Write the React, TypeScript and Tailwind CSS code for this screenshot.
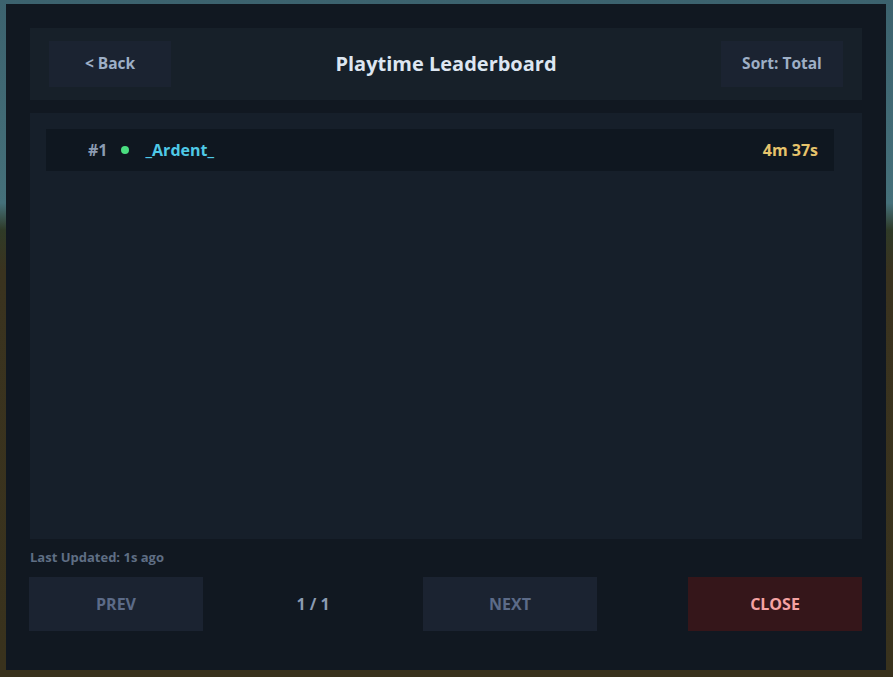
import React from "react";

const font = { fontFamily: "'Open Sans', 'Noto Sans', sans-serif" };

export default function App() {
  const rows = [{ rank: 1, name: "_Ardent_", online: true, time: "4m 37s" }];

  return (
    <div
      className="w-full h-[677px] pl-[6px] pt-[4px] bg-[linear-gradient(to_bottom,#3c626e_0%,#45707a_30%,#2f3a27_34%,#3a331f_40%,#39321d_100%)]"
      style={font}
    >
      <div className="w-[880px] h-[666px] bg-[#111821] flex flex-col px-6 pt-6">
        {/* header */}
        <div className="h-[72px] bg-[#172029] flex items-center justify-between px-[19px]">
          <button className="w-[122px] h-[46px] bg-[#1b2331] text-[#9eafc6] font-bold text-[15.5px]">
            &lt; Back
          </button>
          <h1 className="text-[#dde6f1] font-bold text-[20px]">Playtime Leaderboard</h1>
          <button className="w-[122px] h-[46px] bg-[#1b2331] text-[#9eafc6] font-bold text-[15.5px]">
            Sort: Total
          </button>
        </div>

        {/* list */}
        <div className="mt-[13px] h-[426px] bg-[#161f2a] pl-4 pr-7 pt-4 flex flex-col">
          {rows.map((r) => (
            <div key={r.rank} className="h-[42px] bg-[#0f1720] flex items-center pl-[42px] pr-4">
              <span className="text-[#8b9bb2] font-bold text-[16px]">#{r.rank}</span>
              <span className="ml-[13px] w-2 h-2 rounded-full bg-[#4ade80]" />
              <span className="ml-[17px] text-[#4fc9e6] font-bold text-[16px]">{r.name}</span>
              <span className="ml-auto text-[#e6c36b] font-bold text-[16px]">{r.time}</span>
            </div>
          ))}
        </div>

        <p className="mt-[10px] text-[13px] leading-4 font-bold text-[#5f6e84]">Last Updated: 1s ago</p>

        {/* footer */}
        <div className="mt-[12px] -ml-px flex items-center">
          <button className="w-[174px] h-[54px] bg-[#1b2331] text-[#5c6b88] font-bold text-[16px]">PREV</button>
          <span className="w-[220px] text-center text-[#8b9bb2] font-bold text-[16px]">1 / 1</span>
          <button className="w-[174px] h-[54px] bg-[#1b2331] text-[#5c6b88] font-bold text-[16px]">NEXT</button>
          <button className="ml-auto w-[174px] h-[54px] bg-[#35161a] text-[#f5a3a3] font-bold text-[16px]">CLOSE</button>
        </div>
      </div>
    </div>
  );
}
